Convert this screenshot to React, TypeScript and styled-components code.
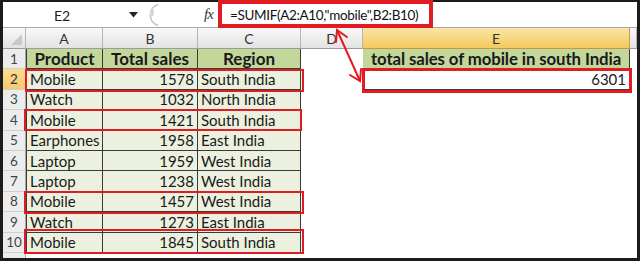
import React from "react";
import styled, { createGlobalStyle, css } from "styled-components";

const GlobalStyle = createGlobalStyle`
  html, body { margin: 0; padding: 0; background: #ffffff; }
  * { box-sizing: border-box; }
`;

const FONT = `Lato, "Open Sans", "Liberation Sans", sans-serif`;

const Frame = styled.div`
  position: relative;
  width: 640px;
  height: 261px;
  border: 3px solid #1c1c1c;
  border-top-width: 2px;
  display: flex;
  flex-direction: column;
  background: #ffffff;
  font-family: ${FONT};
`;

const FormulaBar = styled.div`
  height: 26px;
  flex: none;
  display: flex;
  align-items: center;
  border-bottom: 1px solid #a8a8a8;
  background: #ffffff;
`;

const NameBox = styled.div`
  width: 118px;
  text-align: center;
  font-size: 14px;
  color: #222;
  padding-top: 1px;
`;

const Drop = styled.svg`
  width: 9px;
  height: 6px;
  margin-left: 8px;
  flex: none;
`;

const Handle = styled.svg`
  width: 18px;
  height: 24px;
  margin-left: 5px;
  flex: none;
`;

const Fx = styled.div`
  margin-left: 43px;
  width: 17px;
  font-family: "Liberation Serif", "DejaVu Serif", serif;
  font-style: italic;
  font-size: 15px;
  color: #333;
  letter-spacing: -1px;
`;

const FormulaText = styled.div`
  margin-left: 9px;
  font-size: 13.5px;
  color: #111;
  white-space: nowrap;
  letter-spacing: -0.35px;
`;

const Sheet = styled.div`
  flex: 1;
  display: grid;
  grid-template-columns: 23px 77px 95px 103px 62px 267px 1fr;
  grid-template-rows: 21px repeat(10, 20.4px) 1fr;
`;

const headerGrad = css`
  background: linear-gradient(#f8f8f8, #e3e3e3);
`;

const Corner = styled.div`
  position: relative;
  ${headerGrad};
  border-right: 1px solid #b5b5b5;
  border-bottom: 1px solid #9c9c9c;
  &::after {
    content: "";
    position: absolute;
    right: 3px;
    bottom: 3px;
    border-style: solid;
    border-width: 0 0 11px 11px;
    border-color: transparent transparent #c8c8c8 transparent;
  }
`;

const ColHead = styled.div<{ $selected?: boolean }>`
  display: flex;
  align-items: center;
  justify-content: center;
  font-size: 14px;
  color: #333;
  border-right: 1px solid #b5b5b5;
  border-bottom: 1px solid #9c9c9c;
  ${headerGrad};
  ${(p) =>
    p.$selected &&
    css`
      background: linear-gradient(#fbe5a4, #f3c95c);
      border-right-color: #c9a04a;
      border-bottom-color: #c29a3f;
    `}
`;

const RowHead = styled.div<{ $selected?: boolean }>`
  display: flex;
  align-items: center;
  justify-content: center;
  font-size: 13.5px;
  color: #444;
  background: #ececec;
  border-right: 1px solid #a8a8a8;
  border-bottom: 1px solid #cfcfcf;
  ${(p) =>
    p.$selected &&
    css`
      background: linear-gradient(#fbdc92, #f6c96f);
      color: #333;
    `}
`;

type CellKind = "head" | "body" | "blank" | "result";

const Cell = styled.div<{ $kind: CellKind; $right?: boolean; $first?: boolean }>`
  display: flex;
  align-items: center;
  padding: 0 3px;
  white-space: nowrap;
  overflow: hidden;
  font-size: 15px;
  color: #1a1a1a;
  justify-content: ${(p) => (p.$right ? "flex-end" : "flex-start")};
  ${(p) =>
    p.$kind === "head" &&
    css`
      background: #c4d79b;
      font-weight: 700;
      font-size: 17px;
      justify-content: center;
      border-right: 1px solid #3a3a3a;
      border-bottom: 1px solid #3a3a3a;
    `}
  ${(p) =>
    p.$kind === "body" &&
    css`
      background: #ebf1de;
      border-right: 1px solid #3a3a3a;
      border-bottom: 1px solid #3a3a3a;
    `}
  ${(p) =>
    p.$kind === "result" &&
    css`
      background: #ffffff;
      border-right: 1px solid #3a3a3a;
      border-bottom: 1px solid #3a3a3a;
    `}
  ${(p) =>
    p.$kind === "blank" &&
    css`
      background: #ffffff;
    `}
  ${(p) => p.$first && css`border-left: 1px solid #3a3a3a;`}
`;

const HeadCellE = styled(Cell)`
  letter-spacing: -0.1px;
  font-size: 16.8px;
`;

const FillerRowHead = styled.div`
  background: #ececec;
  border-right: 1px solid #a8a8a8;
`;

const Annotation = styled.div<{ $x: number; $y: number; $w: number; $h: number; $t: number }>`
  position: absolute;
  left: ${(p) => p.$x - 3}px;
  top: ${(p) => p.$y - 2}px;
  width: ${(p) => p.$w}px;
  height: ${(p) => p.$h}px;
  border: ${(p) => p.$t}px solid #e01b22;
  pointer-events: none;
`;

const ArrowLayer = styled.svg`
  position: absolute;
  left: -3px;
  top: -2px;
  width: 640px;
  height: 261px;
  pointer-events: none;
`;

const rows: [string, number, string][] = [
  ["Mobile", 1578, "South India"],
  ["Watch", 1032, "North India"],
  ["Mobile", 1421, "South India"],
  ["Earphones", 1958, "East India"],
  ["Laptop", 1959, "West India"],
  ["Laptop", 1238, "West India"],
  ["Mobile", 1457, "West India"],
  ["Watch", 1273, "East India"],
  ["Mobile", 1845, "South India"],
];

const boxes = [
  { x: 25, y: 69, w: 279, h: 23, t: 2 },
  { x: 24, y: 109, w: 278, h: 22, t: 2 },
  { x: 24, y: 191, w: 280, h: 23, t: 2 },
  { x: 24, y: 229, w: 280, h: 25, t: 2 },
  { x: 362, y: 68, w: 270, h: 25, t: 3 },
  { x: 218, y: 0, w: 215, h: 28, t: 4 },
];

export default function App() {
  return (
    <>
      <GlobalStyle />
      <Frame>
        <FormulaBar>
          <NameBox>E2</NameBox>
          <Drop viewBox="0 0 9 6">
            <path d="M0 0 L9 0 L4.5 5.5 Z" fill="#222" />
          </Drop>
          <Handle viewBox="0 0 18 24">
            <path d="M15 1.5 A11 11 0 0 0 15 22.5" fill="none" stroke="#c4c4c4" strokeWidth="1.6" />
            <rect x="7" y="6" width="4" height="7" rx="2" fill="#d6d6d6" />
          </Handle>
          <Fx>fx</Fx>
          <FormulaText>=SUMIF(A2:A10,"mobile",B2:B10)</FormulaText>
        </FormulaBar>
        <Sheet>
          <Corner />
          {["A", "B", "C", "D", "E"].map((c) => (
            <ColHead key={c} $selected={c === "E"}>
              {c}
            </ColHead>
          ))}
          <ColHead />

          <RowHead>1</RowHead>
          <Cell $kind="head" $first>Product</Cell>
          <Cell $kind="head">Total sales</Cell>
          <Cell $kind="head">Region</Cell>
          <Cell $kind="blank" />
          <HeadCellE $kind="head">total sales of mobile in south India</HeadCellE>
          <Cell $kind="blank" />

          {rows.map(([p, s, r], i) => (
            <React.Fragment key={i}>
              <RowHead $selected={i === 0}>{i + 2}</RowHead>
              <Cell $kind="body" $first>{p}</Cell>
              <Cell $kind="body" $right>{s}</Cell>
              <Cell $kind="body">{r}</Cell>
              <Cell $kind="blank" />
              {i === 0 ? (
                <Cell $kind="result" $right>6301</Cell>
              ) : (
                <Cell $kind="blank" />
              )}
              <Cell $kind="blank" />
            </React.Fragment>
          ))}
          <FillerRowHead />
        </Sheet>

        {boxes.map((b, i) => (
          <Annotation key={i} $x={b.x} $y={b.y} $w={b.w} $h={b.h} $t={b.t} />
        ))}

        <ArrowLayer viewBox="0 0 640 261">
          <g stroke="#e01b22" strokeWidth="2" fill="none" strokeLinecap="round">
            <line x1="337" y1="30" x2="360" y2="81" />
            <polyline points="336,42 337,30 347,37" />
            <polyline points="350,75 360,81 361,69" />
          </g>
        </ArrowLayer>
      </Frame>
    </>
  );
}
